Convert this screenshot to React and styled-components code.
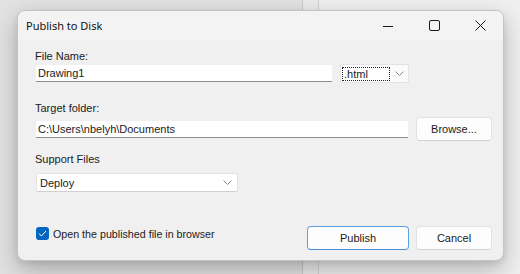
import styled, { createGlobalStyle } from "styled-components";

const Global = createGlobalStyle`
  html, body {
    margin: 0;
    padding: 0;
  }
  body {
    width: 520px;
    height: 274px;
    overflow: hidden;
    font-family: "Liberation Sans", Arial, sans-serif;
  }
`;

const Desktop = styled.div`
  position: relative;
  width: 520px;
  height: 274px;
  display: flex;
  background: #e9e9e9;
`;

const Pane = styled.div`
  width: ${(p) => p.w || "auto"};
  flex: ${(p) => (p.w ? "none" : "1")};
  background: ${(p) => p.bg};
  border-right: ${(p) => (p.line ? `1px solid ${p.line}` : "none")};
`;

const Dialog = styled.div`
  position: absolute;
  left: 17px;
  top: 10px;
  width: 487px;
  height: 251px;
  box-sizing: border-box;
  border: 1px solid #c4c4c4;
  border-radius: 8px;
  background: #f0f0f0;
  box-shadow: 0 9px 24px rgba(0, 0, 0, 0.26), 0 2px 6px rgba(0, 0, 0, 0.08);
  display: flex;
  flex-direction: column;
  overflow: hidden;
  color: #1b1b1b;
`;

const TitleBar = styled.div`
  height: 29px;
  display: flex;
  align-items: center;
  background: #f3f3f3;
  padding-left: 8px;
`;

const Title = styled.div`
  flex: 1;
  font-family: "Noto Sans", "Open Sans", sans-serif;
  font-size: 11px;
  color: #111;
`;

const Caption = styled.div`
  width: 46px;
  height: 29px;
  display: flex;
  align-items: center;
  justify-content: center;
`;

const Body = styled.div`
  flex: 1;
  display: flex;
  flex-direction: column;
  padding: 0 11px 0 17px;
`;

const Label = styled.div`
  font-size: 11px;
  line-height: 14px;
  margin-top: ${(p) => p.mt}px;
`;

const Row = styled.div`
  display: flex;
  align-items: center;
  margin-top: ${(p) => p.mt}px;
`;

const TextBox = styled.div`
  width: ${(p) => p.w}px;
  height: 17px;
  box-sizing: border-box;
  background: #fff;
  border-bottom: 1px solid #8d8d8d;
  font-size: 11px;
  line-height: 17px;
  padding-left: 2px;
  margin-left: 1px;
`;

const Combo = styled.div`
  width: 69px;
  height: 19px;
  box-sizing: border-box;
  margin-left: 8px;
  background: #fbfbfb;
  border: 1px solid #e3e3e3;
  border-radius: 2px;
  display: flex;
  align-items: center;
  padding-left: 1px;
`;

const FocusText = styled.div`
  width: 48px;
  height: 14px;
  box-sizing: border-box;
  border: 1px dotted #222;
  background: #fff;
  font-size: 11px;
  line-height: 12px;
  padding-left: 1px;
`;

const Chevron = styled.div`
  flex: ${(p) => (p.w ? "none" : "1")};
  width: ${(p) => (p.w ? `${p.w}px` : "auto")};
  display: flex;
  justify-content: center;
`;

const Button = styled.button`
  width: ${(p) => p.w}px;
  height: 24px;
  box-sizing: border-box;
  margin-left: ${(p) => p.ml || 0}px;
  background: #fdfdfd;
  border: 1px solid ${(p) => (p.primary ? "#5f9fdc" : "#e2e2e2")};
  border-bottom-color: ${(p) => (p.primary ? "#4a8fd3" : "#d2d2d2")};
  border-radius: 4px;
  font-family: "Liberation Sans", Arial, sans-serif;
  font-size: 11px;
  color: #1b1b1b;
  padding: 0;
`;

const Select = styled.div`
  width: 202px;
  height: 19px;
  box-sizing: border-box;
  margin-left: 1px;
  margin-top: 7px;
  background: #fff;
  border: 1px solid #e3e3e3;
  border-bottom-color: #cfcfcf;
  border-radius: 2px;
  display: flex;
  align-items: center;
  font-size: 11px;
  padding-left: 3px;
`;

const SelectText = styled.div`
  flex: 1;
`;

const Footer = styled.div`
  display: flex;
  align-items: flex-start;
  margin-top: 34px;
`;

const Check = styled.label`
  flex: 1;
  display: flex;
  align-items: center;
  gap: 4px;
  margin-top: 1px;
  margin-left: 1px;
  font-size: 10.7px;
`;

const Box = styled.span`
  width: 13px;
  height: 13px;
  border-radius: 3px;
  background: #0067c0;
  display: flex;
  align-items: center;
  justify-content: center;
`;

const ChevronIcon = () => (
  <svg width="9" height="5" viewBox="0 0 9 5">
    <path d="M0.5 0.5 L4.5 4.5 L8.5 0.5" fill="none" stroke="#7a7a7a" strokeWidth="0.9" />
  </svg>
);

const App = () => (
  <Desktop>
    <Global />
    <Pane w="302px" bg="#e2e2e2" line="#c9c9c9" />
    <Pane w="15px" bg="#ebebeb" line="#d2d2d2" />
    <Pane bg="#f0f0f0" />
    <Dialog>
      <TitleBar>
        <Title>Publish to Disk</Title>
        <Caption>
          <svg width="10" height="10" viewBox="0 0 10 10">
            <path d="M0 5.5 H10" stroke="#1a1a1a" strokeWidth="1" />
          </svg>
        </Caption>
        <Caption>
          <svg width="11" height="11" viewBox="0 0 11 11">
            <rect x="0.5" y="0.5" width="10" height="10" rx="1.5" fill="none" stroke="#1a1a1a" strokeWidth="1" />
          </svg>
        </Caption>
        <Caption>
          <svg width="11" height="11" viewBox="0 0 11 11">
            <path d="M0.5 0.5 L10.5 10.5 M10.5 0.5 L0.5 10.5" stroke="#1a1a1a" strokeWidth="1" />
          </svg>
        </Caption>
      </TitleBar>
      <Body>
        <Label mt={9}>File Name:</Label>
        <Row mt={1}>
          <TextBox w={296}>Drawing1</TextBox>
          <Combo>
            <FocusText>.html</FocusText>
            <Chevron>
              <ChevronIcon />
            </Chevron>
          </Combo>
        </Row>
        <Label mt={18}>Target folder:</Label>
        <Row mt={2}>
          <TextBox w={372}>C:\Users\nbelyh\Documents</TextBox>
          <Button w={76} ml={8}>Browse...</Button>
        </Row>
        <Label mt={11}>Support Files</Label>
        <Select>
          <SelectText>Deploy</SelectText>
          <Chevron w={20}>
            <ChevronIcon />
          </Chevron>
        </Select>
        <Footer>
          <Check>
            <Box>
              <svg width="9" height="7" viewBox="0 0 9 7">
                <path d="M1 3.6 L3.4 6 L8 1" fill="none" stroke="#fff" strokeWidth="1" />
              </svg>
            </Box>
            Open the published file in browser
          </Check>
          <Button w={102} primary>Publish</Button>
          <Button w={76} ml={7}>Cancel</Button>
        </Footer>
      </Body>
    </Dialog>
  </Desktop>
);

export default App;
